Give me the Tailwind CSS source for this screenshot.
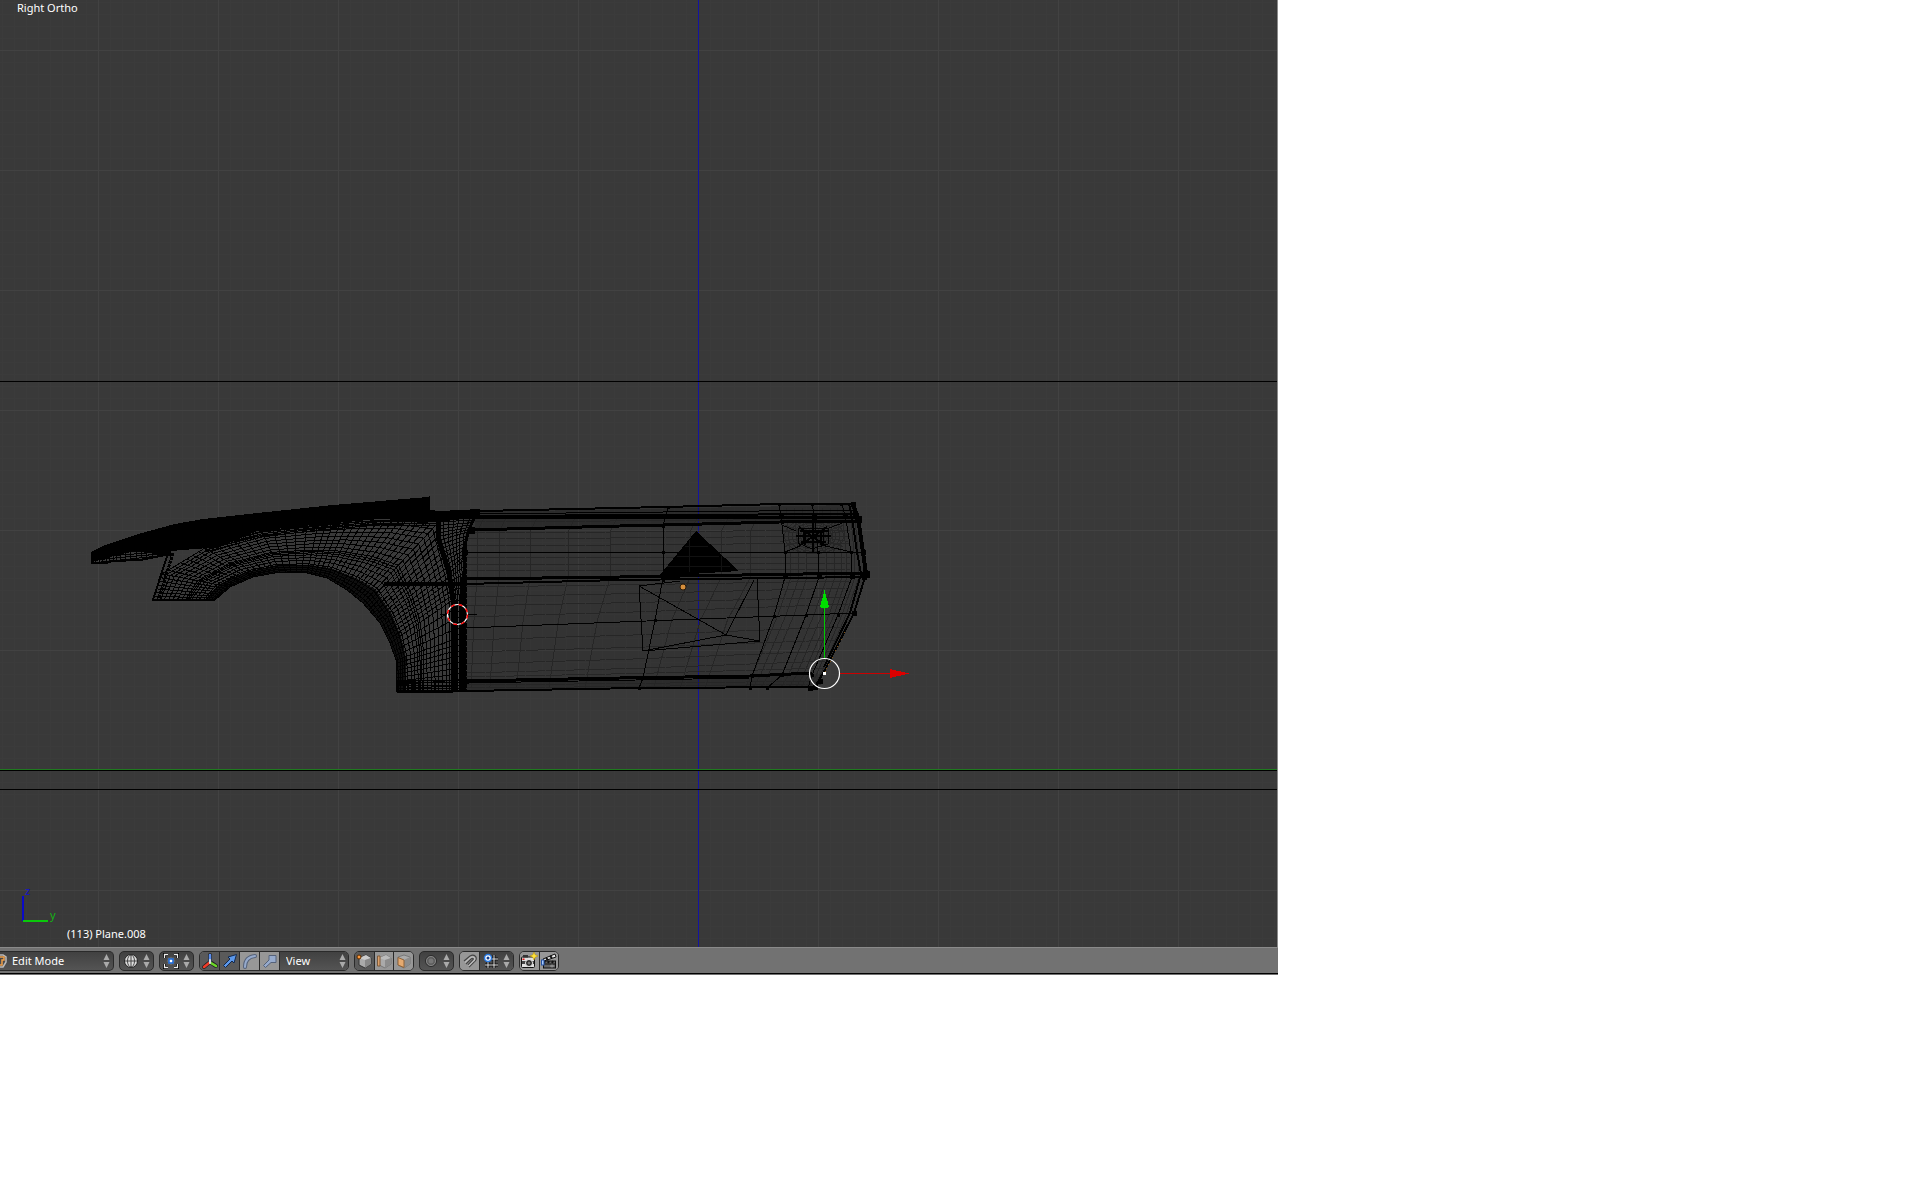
<!DOCTYPE html>
<html lang="en">
<head>
<meta charset="utf-8">
<title>3D View</title>
<script src="https://cdn.jsdelivr.net/npm/@tailwindcss/browser@4"></script>
</head>
<body class="min-h-screen bg-white font-['Noto_Sans',sans-serif] text-[11px] text-white">
<main class="flex h-[81.25vh] w-[66.56%] flex-col overflow-hidden bg-[#727272]">
  <section class="relative min-h-0 flex-1 overflow-hidden border-r border-[#8a8a8a] bg-[#393939]" aria-label="3D viewport">
    <svg class="absolute inset-0 size-full" shape-rendering="crispEdges" fill="none" stroke-width="1">
      <defs>
        <pattern id="minor" x="2" y="2" width="12" height="12" patternUnits="userSpaceOnUse"><path d="M.5 0V12M0 .5H12" stroke="#3b3b3b"/></pattern>
        <pattern id="major" x="98" y="50" width="120" height="120" patternUnits="userSpaceOnUse"><path d="M.5 0V120M0 .5H120" stroke="#424242"/></pattern>
      </defs>
      <rect width="100%" height="100%" fill="url(#minor)"/>
      <rect width="100%" height="100%" fill="url(#major)"/>
      <rect x="698" width="1" height="100%" fill="#1414a0"/>
      <rect y="381" width="100%" height="1" fill="#000"/>
      <rect y="769" width="100%" height="1" fill="#1f7a1f"/>
      <rect y="770" width="100%" height="1" fill="#000"/>
      <rect y="789" width="100%" height="1" fill="#000"/>

      <!-- door and rear quarter: tinted faces -->
      <path d="M465 512L853 504L866 574L854 613L824 673L815 687L465 691Z" fill="#000" fill-opacity=".1"/>
      <path d="M475 512L853 505L857 521L475 530Z" fill="#000" fill-opacity=".15"/>
      <path d="M465 681L822 674L815 687L465 691Z" fill="#000" fill-opacity=".15"/>
      <g id="faint" stroke="#262626"></g>

      <!-- hood -->
      <path fill="#000" d="M91 552L105 545L120 540L142 533L175 524L203 519L267 512L333 505L428 497L430 496V510L440 511L480 509V517L437 522L380 519L313 525L257 531L220 547L171 551V556L133 551L92 562Z"/>
      <g stroke="#000" id="mesh"></g>
      <path id="archband" fill="#000" fill-opacity=".75"/>
      <path d="M92 552V563H106L112 561L140 560L166 555" stroke="#000" stroke-width="2"/>
      <path d="M168 553L153 600H214L222 592" stroke="#000" stroke-width="2"/>
      <path d="M173 553L159 598" stroke="#000" stroke-dasharray="3 1" stroke-width="3"/>
      <path d="M384 584H466" stroke="#000" stroke-width="4"/>
      <path d="M438 516V537L449 573L453 600V691" stroke="#000" stroke-width="5"/>
      <path d="M475 516L468 532L464 550V691M461 584V691" stroke="#000" stroke-width="3"/>
      <path d="M466 545V691" stroke="#000" stroke-dasharray="5 1"/>
      <path d="M396 691H469" stroke="#000" stroke-width="2"/>
      <path d="M396 682H412V690" stroke="#000" stroke-width="3"/>

      <!-- door horizontals -->
      <g stroke="#000">
        <path stroke-width="2" d="M430 512L480 511L664 507L780 504H855M470 516L857 514M396 691L465 691L640 688L815 687"/>
        <path stroke-width="3" d="M470 518L857 517M470 530L620 526L663 525L780 522L857 521M465 579L620 577L865 573M465 681L620 678L750 676L812 673"/>
        <path stroke-width="2" d="M465 584L620 580L866 577"/>
        <path d="M470 514L857 510M465 552H865M465 628L620 622L780 616L855 613M465 683L750 678"/>
        <path d="M668 507L666 515L663 526V578L655 620L643 678L639 688M779 504L782 525L785 552V577L774 616L752 676L750 688M812 504L815 520L818 552L819 577L806 615L782 675L767 688M842 504L846 520L851 552L852 577L838 615L812 675L808 688"/>
        <path stroke-width="4" d="M853 504L858 518L863 552L866 574"/>
        <path stroke-width="2" d="M849 504L852 518L857 552L861 574L850 613L824 667M866 574L854 613L826 668L815 687"/>
      </g>
      <g id="verts" fill="#000"></g>

      <!-- tail light fan -->
      <g stroke="#000"><path d="M782 525L796 531M845 522L829 528M785 552L800 546M851 552L826 546M798 528H828V544L812 549L798 543ZM803 532H823V541H803Z"/>
      <path stroke-width="2" d="M796 536H831M813 520V552M799 527L826 546M827 527L799 546M805 530V545M821 530V545M800 531H828M801 542H826"/></g>

      <path fill="#000" d="M696 531L659 576L739 571Z"/>
      <path stroke="#393939" stroke-opacity=".3" d="M685 546H708M677 556H719M667 566H730M689 540V572M721 556V571"/>
      <path stroke="#000" d="M639 586L643 651L760 641L757 579M726 635L639 586M754 580L726 635L760 641M643 651L726 635M639 586L680 581"/>
      <circle cx="683" cy="587" r="3" fill="#d58e3c" stroke="#2b1c0c" shape-rendering="auto"/>

      <!-- 3D cursor -->
      <path d="M440 614H450M466 614H477M457 597V606M457 624V632" stroke="#000"/>
      <circle cx="457.500" cy="614.500" r="10" stroke="#fff" stroke-width="1.200" shape-rendering="auto"/>
      <circle cx="457.500" cy="614.500" r="10" stroke="#f00" stroke-width="1.400" stroke-dasharray="4 4" shape-rendering="auto"/>

      <!-- transform manipulator -->
      <path d="M845 632L825 672" stroke="#805010" stroke-dasharray="1 3"/>
      <path d="M824.500 659V607" stroke="#0c0"/>
      <path d="M824.500 590L829 607Q824 610 820 607Z" fill="#00dc00"/>
      <path d="M839 673.500H892" stroke="#c00"/>
      <path d="M909 673.500L890 669V678Z" fill="#dc0000"/>
      <circle cx="824.500" cy="673.500" r="15" stroke="#fff" stroke-width="1.200" shape-rendering="auto"/>
      <rect x="823" y="672" width="3" height="3" fill="#fff"/>

      <!-- axis indicator -->
      <path d="M23 896V921" stroke="#0a0ac8" stroke-width="2"/>
      <path d="M23 921H48" stroke="#0ac80a" stroke-width="2"/>
    </svg>
    <p class="absolute left-[17px] top-0 leading-4">Right Ortho</p>
    <p class="absolute bottom-12 left-[25px] leading-4 text-[#1414c8]">z</p>
    <p class="absolute bottom-6 left-[50px] leading-4 text-[#14b414]">y</p>
    <p class="absolute bottom-[5px] left-[67px] leading-4">(113) Plane.008</p>
  </section>

  <header class="flex h-7 shrink-0 items-center gap-[5px] border-b border-t border-b-[#707070] border-t-[#8a8a8a] bg-[#727272] shadow-[inset_0_-1px_0_#000]">
    <label class="relative flex h-5 w-[114px] items-center rounded-r-[5px] border border-l-0 border-[#2a2a2a] bg-linear-to-b from-[#414141] to-[#545454]">
      <svg class="h-4 w-2 shrink-0" viewBox="0 0 8 16" fill="none"><path d="M0 2H3L6 4V9L3 14H0" stroke="#bbb" stroke-width="1.500"/><path d="M0 4H4V7H2V12H0" stroke="#f0a04a" stroke-width="1.500"/></svg>
      <select aria-label="Mode" class="h-full flex-1 appearance-none bg-transparent pl-1 text-white"><option>Edit Mode</option></select>
      <svg class="absolute right-[3px] h-4 w-[7px]" viewBox="0 0 7 16" fill="#aaa"><path d="M3.500 1L6.500 7H.5ZM3.500 15L6.500 9H.5Z"/></svg>
    </label>

    <button aria-label="Viewport shading" class="flex h-5 w-[35px] items-center justify-between rounded-[5px] border border-[#2a2a2a] bg-linear-to-b from-[#414141] to-[#545454] px-[3px]">
      <svg class="size-4" viewBox="0 0 16 16" fill="none" stroke="#444"><circle cx="8" cy="8" r="6.500" fill="#ddd" stroke="#222"/><path d="M2 8H14M8 2V14"/><ellipse cx="8" cy="8" rx="3.500" ry="6"/></svg>
      <svg class="h-4 w-[7px]" viewBox="0 0 7 16" fill="#aaa"><path d="M3.500 1L6.500 7H.5ZM3.500 15L6.500 9H.5Z"/></svg>
    </button>

    <button aria-label="Pivot point" class="flex h-5 w-[35px] items-center justify-between rounded-[5px] border border-[#2a2a2a] bg-linear-to-b from-[#414141] to-[#545454] px-[3px]">
      <svg class="size-4" viewBox="0 0 16 16" fill="none"><path d="M1.500 5V1.500H5M11 1.500H14.500V5M14.500 11V14.500H11M5 14.500H1.500V11" stroke="#000" stroke-width="3"/><path d="M1.500 5V1.500H5M11 1.500H14.500V5M14.500 11V14.500H11M5 14.500H1.500V11" stroke="#eee" stroke-width="1.300"/><circle cx="8" cy="8" r="4" fill="#888" stroke="#555"/><rect x="6" y="6" width="4" height="4" fill="#fff" stroke="#1464d8" stroke-width="1.500"/></svg>
      <svg class="h-4 w-[7px]" viewBox="0 0 7 16" fill="#aaa"><path d="M3.500 1L6.500 7H.5ZM3.500 15L6.500 9H.5Z"/></svg>
    </button>

    <div class="flex h-5 w-[150px] overflow-hidden rounded-[5px] border border-[#2a2a2a]">
      <button aria-label="Manipulator" class="flex w-5 items-center justify-center border-r border-[#2a2a2a] bg-[#5a5a5a]">
        <svg class="size-[18px]" viewBox="0 0 18 18" fill="none" stroke-linecap="round"><path d="M9 10V3M9 10L3 15M9 10L15 14" stroke="#222" stroke-width="4"/><path d="M9 10V3" stroke="#5a8ef0" stroke-width="2.500"/><path d="M8 11L3 15" stroke="#f03c28" stroke-width="2.500"/><path d="M10 11L15 14" stroke="#6cd828" stroke-width="2.500"/><path d="M9 8V11" stroke="#ddd" stroke-width="2"/></svg>
      </button>
      <button aria-label="Translate" class="flex w-5 items-center justify-center border-r border-[#2a2a2a] bg-[#5a5a5a]">
        <svg class="size-4" viewBox="0 0 16 16"><path d="M1.500 12.500L8 6L6 4L14.500 1.500L12 10L10 8L3.500 14.500Z" fill="#5c98ea" stroke="#12284e"/></svg>
      </button>
      <button aria-label="Rotate" class="flex w-5 items-center justify-center border-r border-[#2a2a2a] bg-[#979797]">
        <svg class="size-4" viewBox="0 0 16 16" fill="none" stroke-linecap="round"><path d="M3 14Q3 4 13 3" stroke="#55627a" stroke-width="4"/><path d="M3 14Q3 4 13 3" stroke="#96aacc" stroke-width="2"/></svg>
      </button>
      <button aria-label="Scale" class="flex w-5 items-center justify-center border-r border-[#2a2a2a] bg-[#979797]">
        <svg class="size-4" viewBox="0 0 16 16"><path d="M1.500 12.500L7 7V2.500H14V9.500H9L3.500 14.500Z" fill="#96aacc" stroke="#55627a"/></svg>
      </button>
      <label class="relative flex flex-1 items-center bg-linear-to-b from-[#414141] to-[#545454]">
        <select aria-label="Transform orientation" class="h-full w-full appearance-none bg-transparent pl-[6px] text-white"><option>View</option></select>
        <svg class="absolute right-[2px] h-4 w-[7px]" viewBox="0 0 7 16" fill="#aaa"><path d="M3.500 1L6.500 7H.5ZM3.500 15L6.500 9H.5Z"/></svg>
      </label>
    </div>

    <div class="flex h-5 w-[60px] overflow-hidden rounded-[5px] border border-[#2a2a2a]">
      <button aria-label="Vertex select" class="flex flex-1 items-center justify-center border-r border-[#2a2a2a] bg-[#5a5a5a]">
        <svg class="size-4" viewBox="0 0 16 16"><path d="M3 5L10 2L15 5V11L9 15L3 12Z" fill="#aaa" stroke="#333"/><path d="M3 5L9 7L15 5L10 2Z" fill="#ccc"/><path d="M9 7V15L15 11V5Z" fill="#888"/><circle cx="3" cy="4" r="2" fill="#ff9a3c" stroke="#5a2c00"/></svg>
      </button>
      <button aria-label="Edge select" class="flex flex-1 items-center justify-center border-r border-[#2a2a2a] bg-[#979797]">
        <svg class="size-4" viewBox="0 0 16 16"><path d="M3 5L10 2L15 5V11L9 15L3 12Z" fill="#aaa" stroke="#777"/><path d="M3 5L9 7L15 5L10 2Z" fill="#bbb"/><path d="M9 7V15L15 11V5Z" fill="#8c8c8c"/><path d="M1.500 3H4V13H1.500Z" fill="#dca06a" stroke="#7c5a3a"/></svg>
      </button>
      <button aria-label="Face select" class="flex flex-1 items-center justify-center bg-[#979797]">
        <svg class="size-4" viewBox="0 0 16 16"><path d="M2 4L8 2L14 4V11L8 15L2 12Z" fill="#aaa" stroke="#777"/><path d="M8 7V15L14 11V4Z" fill="#8c8c8c"/><path d="M2 4.500L8 7V14.500L2 12Z" fill="#e6aa70" stroke="#8c623a"/></svg>
      </button>
    </div>

    <button aria-label="Proportional editing" class="flex h-5 w-[35px] items-center justify-between rounded-[5px] border border-[#2a2a2a] bg-linear-to-b from-[#414141] to-[#545454] px-[3px]">
      <svg class="size-4" viewBox="0 0 16 16" fill="none"><circle cx="8" cy="8" r="5.500" fill="#5c5c5c" stroke="#2c2c2c"/><circle cx="8" cy="8" r="4.500" stroke="#858585"/><circle cx="8" cy="8" r="2.500" fill="#777"/></svg>
      <svg class="h-4 w-[7px]" viewBox="0 0 7 16" fill="#aaa"><path d="M3.500 1L6.500 7H.5ZM3.500 15L6.500 9H.5Z"/></svg>
    </button>

    <div class="flex h-5 w-[55px] overflow-hidden rounded-[5px] border border-[#2a2a2a]">
      <button aria-label="Snap" class="flex w-5 items-center justify-center border-r border-[#2a2a2a] bg-[#979797]">
        <svg class="size-4" viewBox="0 0 16 16" fill="none"><path d="M2 8L8 3Q12 1 14 4Q15 7 12 9L7 14M4 11L9 6Q11 4.500 11.500 6L6 12" stroke="#444" stroke-width="1.200"/><path d="M3 9.500L8.500 4.500Q11 3 12.500 5Q13.500 6.500 11 8.500L6.500 13" stroke="#bbb" stroke-width="1.300"/></svg>
      </button>
      <button aria-label="Snap element" class="flex flex-1 items-center justify-between bg-linear-to-b from-[#414141] to-[#545454] px-[3px]">
        <svg class="size-4" viewBox="0 0 16 16" fill="none"><path d="M5 3V15M11 2V15M2 6H15M2 12H15" stroke="#111" stroke-width="3"/><path d="M5 3V15M11 2V15M2 6H15M2 12H15" stroke="#ddd"/><circle cx="5" cy="5" r="3.500" fill="#fff" stroke="#2878e0" stroke-width="1.500"/><circle cx="5" cy="5" r="1.500" fill="#123c8c"/></svg>
        <svg class="h-4 w-[7px]" viewBox="0 0 7 16" fill="#aaa"><path d="M3.500 1L6.500 7H.5ZM3.500 15L6.500 9H.5Z"/></svg>
      </button>
    </div>

    <div class="flex h-5 w-[40px] overflow-hidden rounded-[5px] border border-[#2a2a2a]">
      <button aria-label="Render image" class="flex flex-1 items-center justify-center border-r border-[#2a2a2a] bg-[#979797]">
        <svg class="size-[18px]" viewBox="0 0 18 18"><rect x="1.500" y="5" width="13" height="10.500" rx="1" fill="#e0e0e0" stroke="#111"/><path d="M2 9H14V12H2Z" fill="#444"/><rect x="3" y="3" width="5" height="2.500" fill="#333"/><circle cx="9" cy="11" r="3.500" fill="#222" stroke="#eee"/><circle cx="9" cy="11" r="1.500" fill="#777"/><rect x="2.500" y="6.500" width="2" height="1.500" fill="#e01010"/><path d="M14 0L15.200 2.800L18 4L15.200 5.200L14 8L12.800 5.200L10 4L12.800 2.800Z" fill="#ffe23c" stroke="#b48c00" stroke-width=".5"/></svg>
      </button>
      <button aria-label="Render animation" class="flex flex-1 items-center justify-center bg-[#979797]">
        <svg class="size-[18px]" viewBox="0 0 18 18"><rect x="3.500" y="9" width="12" height="7" fill="#666" stroke="#111"/><path d="M3 7L15 2L16 5L4 9Z" fill="#eee" stroke="#111"/><path d="M6 6L8 8M10 4L12 6M5 9L4 11M9 9L8 11M13 9L12 11" stroke="#111" stroke-width="2"/><path d="M4 12H15" stroke="#111"/><path d="M10 14H14M12 12.500V15.500" stroke="#999"/><rect x="1.500" y="8" width="2.500" height="5" fill="#a8ccff" stroke="#2450a0"/></svg>
      </button>
    </div>
  </header>
</main>

<script>
const line = pts => 'M' + pts.map(p => p[0].toFixed(1) + ' ' + p[1].toFixed(1)).join('L');
const mix = (a, b, t) => [a[0] + (b[0] - a[0]) * t, a[1] + (b[1] - a[1]) * t];
const add = (id, d, dash) => {
  const p = document.createElementNS('http://www.w3.org/2000/svg', 'path');
  p.setAttribute('d', d);
  if (dash) p.setAttribute('stroke-dasharray', dash);
  document.getElementById(id).append(p);
};
// Wire mesh between two guide curves: rings run along them, spokes across.
function surface(id, a, b, counts, rings) {
  let d = '';
  rings.forEach(t => d += line(a.map((p, i) => mix(p, b[i], t))));
  counts.forEach((n, i) => {
    for (let k = 0; k <= n; k++) d += line([mix(a[i], a[i + 1], k / n), mix(b[i], b[i + 1], k / n)]);
  });
  add(id, d);
}
const even = n => Array.from({ length: n + 1 }, (_, i) => i / n);
const arch = [[215,600],[230,587],[253,577],[280,572],[307,573],[327,578],[347,590],[363,603],[380,623],[390,643],[396,660],[397,692]];
const edge = [[153,600],[162,574],[205,548],[262,531],[318,525],[355,522],[400,520],[437,524],[449,572],[453,600],[453,640],[453,692]];
surface('mesh', arch, edge, [7,7,6,5,5,6,6,9,6,4,9],
  [0,.03,.07,.11,.15,.19,.26,.32,.38,.42,.45,.48,.54,.61,.68,.75,.82,.88,.94,1]);
document.getElementById('archband').setAttribute('d',
  line(arch.concat(arch.map((p, i) => mix(p, edge[i], .17)).reverse())) + 'Z');
surface('mesh', [[438,518],[440,540],[449,573],[453,600],[453,691]], [[475,518],[468,532],[464,560],[464,600],[464,691]], [6,8,6,16], even(7));
surface('mesh', [[92,552],[120,550],[168,548]], [[92,563],[120,560],[168,555]], [8,9], even(4));
surface('mesh', [[205,546],[262,532],[318,526],[380,520],[437,520]], [[205,552],[262,537],[318,530],[380,525],[437,526]], [5,5,5,5], even(3));
surface('mesh', [[397,680],[465,680]], [[397,691],[465,691]], [18], even(4));
// Subdivided surface of the door, drawn faintly.
const xs = [477,499,530,568,610,690,721,750];
xs.forEach(x => add('faint', line([[x + 8,516],[x + 1,530],[x,578],[x - 3 - (x - 477) / 14,620],[x - 6 - (x - 477) / 7,688]])));
[[519,517],[522,519],[533,530],[539,536],[546,543],[558,557],[565,563],[571,569],[587,581],[597,588],[606,597],[617,604],[640,627],[652,640],[664,651],[673,661],[677,668],[685,681],[688,684]]
  .forEach(([l, r]) => add('faint', line([[466,l],[640,l + (r - l) * .4],[850 - Math.max(0, r - 600) / 3, r]]), '19 1'));
[790,798,806,826,834,841,846,854,858].forEach(x =>
  add('faint', line([[x - 4,508],[x,552],[x + 1,577],[x - 12,615],[x - 38,676],[x - 45,687]])));
for (let r = 10; r < 32; r += 4) add('faint', line(Array.from({ length: 17 }, (_, i) => [814 + r * Math.cos(i * Math.PI / 8), 536 + r * .6 * Math.sin(i * Math.PI / 8)])));
for (let i = 0; i < 20; i++) add('faint', line([[814,536],[814 + 36 * Math.cos(i * Math.PI / 10), 536 + 18 * Math.sin(i * Math.PI / 10)]]));
// Vertex handles: x, y and half size
[[668,507],[666,515],[663,526],[663,552],[663,575,2],[663,580],[655,620],[643,678],[639,688],[779,504],[781,516,2],[782,522],[785,552],[785,576,2],[774,616],[752,676],[750,688],[812,504],[814,517,2],[818,552],[819,575,2],[806,615],[782,675],[767,688],[841,504],[845,515,2],[851,552],[852,576,2],[838,615],[812,675],[810,688,2],[853,504,2],[855,513,2],[858,519,3],[863,552,2],[866,574,3],[864,577,2],[854,613,2],[815,687,2],[465,552,2],[463,580,3],[463,628,2],[466,681,2],[471,530,3],[820,681,2]]
  .forEach(([x, y, h = 1]) => {
    const r = document.createElementNS('http://www.w3.org/2000/svg', 'rect');
    r.setAttribute('x', x - h); r.setAttribute('y', y - h);
    r.setAttribute('width', 2 * h + 1); r.setAttribute('height', 2 * h + 1);
    document.getElementById('verts').append(r);
  });
</script>
</body>
</html>
